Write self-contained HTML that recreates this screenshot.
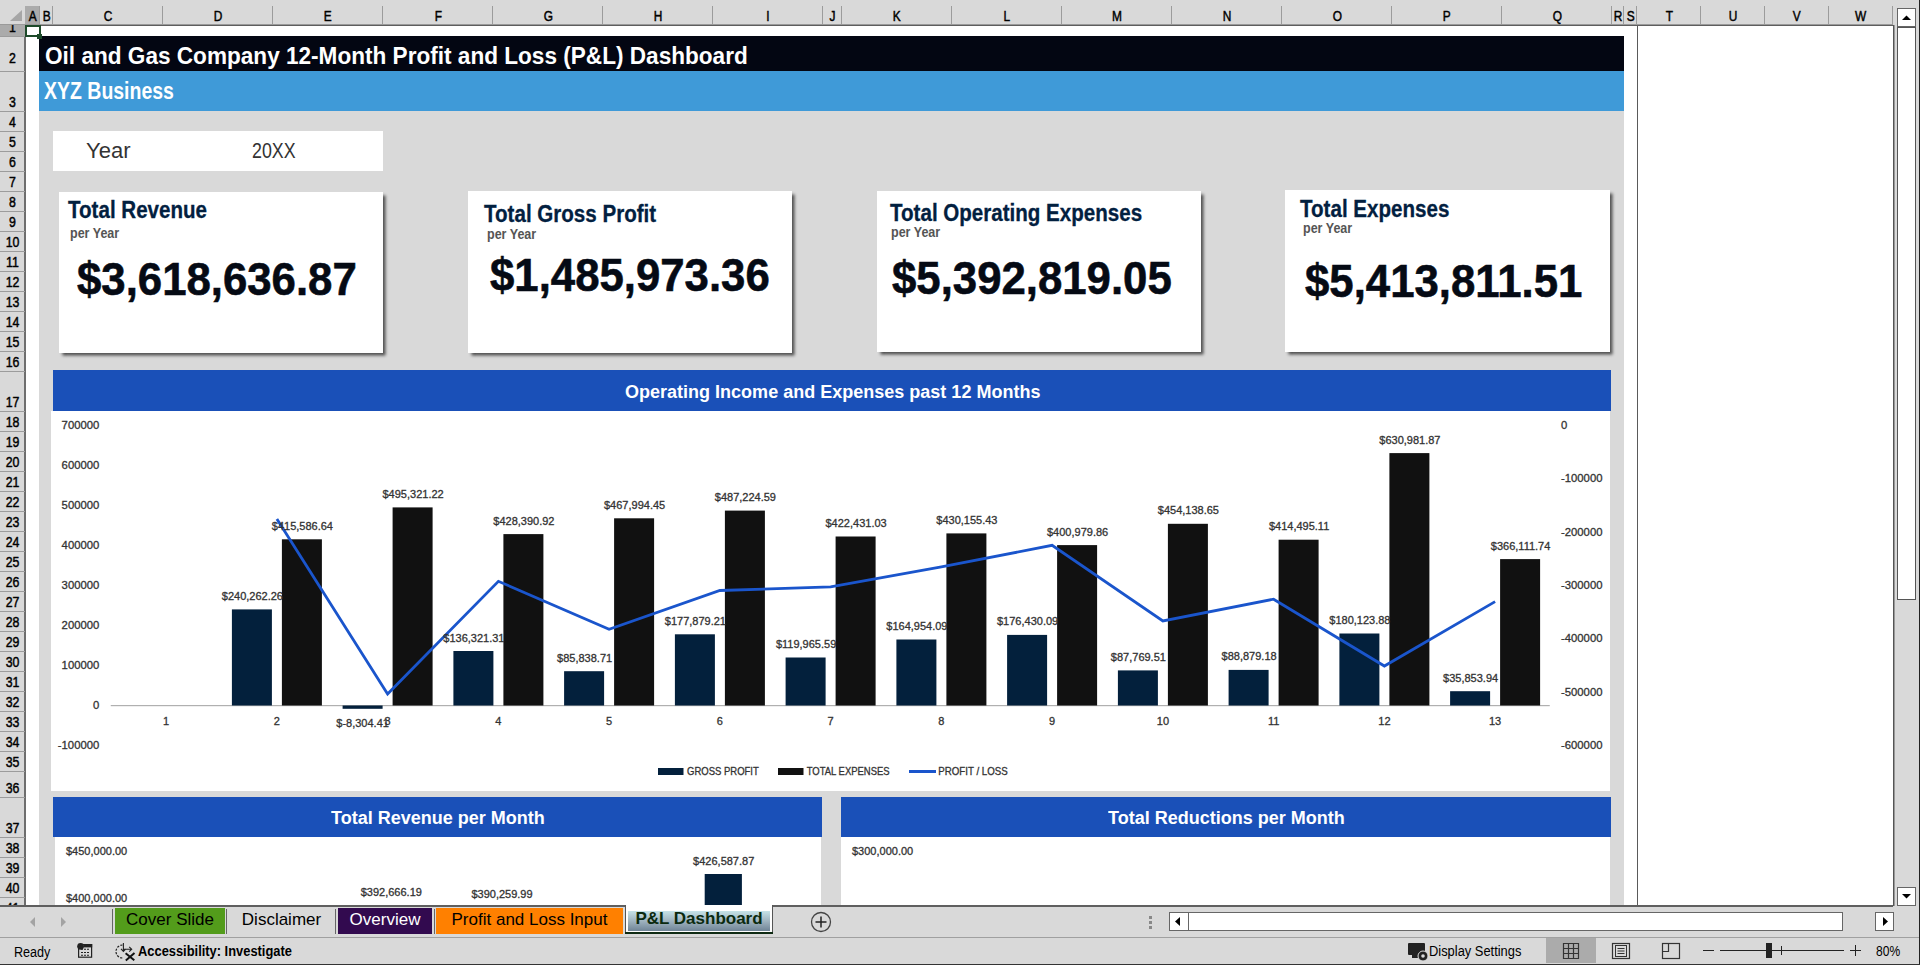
<!DOCTYPE html><html><head><meta charset="utf-8"><style>
html,body{margin:0;padding:0;}
body{width:1920px;height:965px;overflow:hidden;position:relative;background:#d9d9d9;font-family:"Liberation Sans", sans-serif;}
div{box-sizing:border-box;}
.t{position:absolute;white-space:nowrap;line-height:1;}
svg text{stroke:#333;stroke-width:0.3px;}
.ch{position:absolute;top:0;height:25px;text-align:center;font-size:14px;line-height:33px;color:#000;-webkit-text-stroke:0.45px #000;}
.rh{position:absolute;left:0;width:25px;text-align:center;font-size:14px;color:#000;-webkit-text-stroke:0.45px #000;}
</style></head><body>

<div style="position:absolute;left:25px;top:25px;width:1868px;height:880px;background:#fff;"></div>
<div style="position:absolute;left:39px;top:36px;width:1585px;height:869px;background:#d9d9d9;"></div>
<div style="position:absolute;left:1637px;top:25px;width:1px;height:880px;background:#5a5a5a;"></div>
<div style="position:absolute;left:0px;top:0px;width:1893px;height:25px;background:#d9d9d9;"></div>
<div style="position:absolute;left:0px;top:24px;width:1893px;height:1px;background:#9a9a9a;"></div>
<div style="position:absolute;left:0px;top:25px;width:1893px;height:1px;background:#5e5e5e;"></div>
<svg style="position:absolute;left:0;top:0" width="25" height="25"><polygon points="10,21 22,21 22,10" fill="#a6a6a6"/></svg>
<div style="position:absolute;left:25px;top:6px;width:15px;height:18px;background:#ababab;"></div>
<div class="ch" style="left:25px;width:15px;"><span style="display:inline-block;transform:scaleX(0.85);">A</span></div>
<div style="position:absolute;left:39px;top:6px;width:1px;height:18px;background:#9c9c9c;"></div>
<div class="ch" style="left:40px;width:13px;"><span style="display:inline-block;transform:scaleX(0.85);">B</span></div>
<div style="position:absolute;left:52px;top:6px;width:1px;height:18px;background:#9c9c9c;"></div>
<div class="ch" style="left:53px;width:110px;"><span style="display:inline-block;transform:scaleX(0.85);">C</span></div>
<div style="position:absolute;left:162px;top:6px;width:1px;height:18px;background:#9c9c9c;"></div>
<div class="ch" style="left:163px;width:110px;"><span style="display:inline-block;transform:scaleX(0.85);">D</span></div>
<div style="position:absolute;left:272px;top:6px;width:1px;height:18px;background:#9c9c9c;"></div>
<div class="ch" style="left:273px;width:110px;"><span style="display:inline-block;transform:scaleX(0.85);">E</span></div>
<div style="position:absolute;left:382px;top:6px;width:1px;height:18px;background:#9c9c9c;"></div>
<div class="ch" style="left:383px;width:110px;"><span style="display:inline-block;transform:scaleX(0.85);">F</span></div>
<div style="position:absolute;left:492px;top:6px;width:1px;height:18px;background:#9c9c9c;"></div>
<div class="ch" style="left:493px;width:110px;"><span style="display:inline-block;transform:scaleX(0.85);">G</span></div>
<div style="position:absolute;left:602px;top:6px;width:1px;height:18px;background:#9c9c9c;"></div>
<div class="ch" style="left:603px;width:110px;"><span style="display:inline-block;transform:scaleX(0.85);">H</span></div>
<div style="position:absolute;left:712px;top:6px;width:1px;height:18px;background:#9c9c9c;"></div>
<div class="ch" style="left:713px;width:110px;"><span style="display:inline-block;transform:scaleX(0.85);">I</span></div>
<div style="position:absolute;left:822px;top:6px;width:1px;height:18px;background:#9c9c9c;"></div>
<div class="ch" style="left:823px;width:19px;"><span style="display:inline-block;transform:scaleX(0.85);">J</span></div>
<div style="position:absolute;left:841px;top:6px;width:1px;height:18px;background:#9c9c9c;"></div>
<div class="ch" style="left:842px;width:110px;"><span style="display:inline-block;transform:scaleX(0.85);">K</span></div>
<div style="position:absolute;left:951px;top:6px;width:1px;height:18px;background:#9c9c9c;"></div>
<div class="ch" style="left:952px;width:110px;"><span style="display:inline-block;transform:scaleX(0.85);">L</span></div>
<div style="position:absolute;left:1061px;top:6px;width:1px;height:18px;background:#9c9c9c;"></div>
<div class="ch" style="left:1062px;width:110px;"><span style="display:inline-block;transform:scaleX(0.85);">M</span></div>
<div style="position:absolute;left:1171px;top:6px;width:1px;height:18px;background:#9c9c9c;"></div>
<div class="ch" style="left:1172px;width:110px;"><span style="display:inline-block;transform:scaleX(0.85);">N</span></div>
<div style="position:absolute;left:1281px;top:6px;width:1px;height:18px;background:#9c9c9c;"></div>
<div class="ch" style="left:1282px;width:110px;"><span style="display:inline-block;transform:scaleX(0.85);">O</span></div>
<div style="position:absolute;left:1391px;top:6px;width:1px;height:18px;background:#9c9c9c;"></div>
<div class="ch" style="left:1392px;width:110px;"><span style="display:inline-block;transform:scaleX(0.85);">P</span></div>
<div style="position:absolute;left:1501px;top:6px;width:1px;height:18px;background:#9c9c9c;"></div>
<div class="ch" style="left:1502px;width:110px;"><span style="display:inline-block;transform:scaleX(0.85);">Q</span></div>
<div style="position:absolute;left:1611px;top:6px;width:1px;height:18px;background:#9c9c9c;"></div>
<div class="ch" style="left:1612px;width:12px;"><span style="display:inline-block;transform:scaleX(0.85);">R</span></div>
<div style="position:absolute;left:1623px;top:6px;width:1px;height:18px;background:#9c9c9c;"></div>
<div class="ch" style="left:1624px;width:13px;"><span style="display:inline-block;transform:scaleX(0.85);">S</span></div>
<div style="position:absolute;left:1636px;top:6px;width:1px;height:18px;background:#9c9c9c;"></div>
<div class="ch" style="left:1637px;width:64px;"><span style="display:inline-block;transform:scaleX(0.85);">T</span></div>
<div style="position:absolute;left:1700px;top:6px;width:1px;height:18px;background:#9c9c9c;"></div>
<div class="ch" style="left:1701px;width:64px;"><span style="display:inline-block;transform:scaleX(0.85);">U</span></div>
<div style="position:absolute;left:1764px;top:6px;width:1px;height:18px;background:#9c9c9c;"></div>
<div class="ch" style="left:1765px;width:64px;"><span style="display:inline-block;transform:scaleX(0.85);">V</span></div>
<div style="position:absolute;left:1828px;top:6px;width:1px;height:18px;background:#9c9c9c;"></div>
<div class="ch" style="left:1829px;width:64px;"><span style="display:inline-block;transform:scaleX(0.85);">W</span></div>
<div style="position:absolute;left:1892px;top:6px;width:1px;height:18px;background:#9c9c9c;"></div>
<div style="position:absolute;left:0px;top:25px;width:25px;height:880px;background:#d9d9d9;"></div>
<div style="position:absolute;left:24px;top:25px;width:2px;height:880px;background:#6e6e6e;"></div>
<div class="rh" style="top:25px;height:11px;background:#ababab;overflow:hidden;"><div style="position:absolute;left:0;width:25px;top:-6px;line-height:16px;transform:scaleX(0.88);">1</div></div>
<div style="position:absolute;left:0px;top:36px;width:25px;height:1px;background:#9c9c9c;"></div>
<div class="rh" style="top:36px;height:35px;overflow:hidden;"><div style="position:absolute;left:0;width:25px;top:14px;line-height:16px;transform:scaleX(0.88);">2</div></div>
<div style="position:absolute;left:0px;top:71px;width:25px;height:1px;background:#9c9c9c;"></div>
<div class="rh" style="top:71px;height:40px;overflow:hidden;"><div style="position:absolute;left:0;width:25px;top:23px;line-height:16px;transform:scaleX(0.88);">3</div></div>
<div style="position:absolute;left:0px;top:111px;width:25px;height:1px;background:#9c9c9c;"></div>
<div class="rh" style="top:111px;height:20px;overflow:hidden;"><div style="position:absolute;left:0;width:25px;top:3px;line-height:16px;transform:scaleX(0.88);">4</div></div>
<div style="position:absolute;left:0px;top:131px;width:25px;height:1px;background:#9c9c9c;"></div>
<div class="rh" style="top:131px;height:20px;overflow:hidden;"><div style="position:absolute;left:0;width:25px;top:3px;line-height:16px;transform:scaleX(0.88);">5</div></div>
<div style="position:absolute;left:0px;top:151px;width:25px;height:1px;background:#9c9c9c;"></div>
<div class="rh" style="top:151px;height:20px;overflow:hidden;"><div style="position:absolute;left:0;width:25px;top:3px;line-height:16px;transform:scaleX(0.88);">6</div></div>
<div style="position:absolute;left:0px;top:171px;width:25px;height:1px;background:#9c9c9c;"></div>
<div class="rh" style="top:171px;height:20px;overflow:hidden;"><div style="position:absolute;left:0;width:25px;top:3px;line-height:16px;transform:scaleX(0.88);">7</div></div>
<div style="position:absolute;left:0px;top:191px;width:25px;height:1px;background:#9c9c9c;"></div>
<div class="rh" style="top:191px;height:20px;overflow:hidden;"><div style="position:absolute;left:0;width:25px;top:3px;line-height:16px;transform:scaleX(0.88);">8</div></div>
<div style="position:absolute;left:0px;top:211px;width:25px;height:1px;background:#9c9c9c;"></div>
<div class="rh" style="top:211px;height:20px;overflow:hidden;"><div style="position:absolute;left:0;width:25px;top:3px;line-height:16px;transform:scaleX(0.88);">9</div></div>
<div style="position:absolute;left:0px;top:231px;width:25px;height:1px;background:#9c9c9c;"></div>
<div class="rh" style="top:231px;height:20px;overflow:hidden;"><div style="position:absolute;left:0;width:25px;top:3px;line-height:16px;transform:scaleX(0.88);">10</div></div>
<div style="position:absolute;left:0px;top:251px;width:25px;height:1px;background:#9c9c9c;"></div>
<div class="rh" style="top:251px;height:20px;overflow:hidden;"><div style="position:absolute;left:0;width:25px;top:3px;line-height:16px;transform:scaleX(0.88);">11</div></div>
<div style="position:absolute;left:0px;top:271px;width:25px;height:1px;background:#9c9c9c;"></div>
<div class="rh" style="top:271px;height:20px;overflow:hidden;"><div style="position:absolute;left:0;width:25px;top:3px;line-height:16px;transform:scaleX(0.88);">12</div></div>
<div style="position:absolute;left:0px;top:291px;width:25px;height:1px;background:#9c9c9c;"></div>
<div class="rh" style="top:291px;height:20px;overflow:hidden;"><div style="position:absolute;left:0;width:25px;top:3px;line-height:16px;transform:scaleX(0.88);">13</div></div>
<div style="position:absolute;left:0px;top:311px;width:25px;height:1px;background:#9c9c9c;"></div>
<div class="rh" style="top:311px;height:20px;overflow:hidden;"><div style="position:absolute;left:0;width:25px;top:3px;line-height:16px;transform:scaleX(0.88);">14</div></div>
<div style="position:absolute;left:0px;top:331px;width:25px;height:1px;background:#9c9c9c;"></div>
<div class="rh" style="top:331px;height:20px;overflow:hidden;"><div style="position:absolute;left:0;width:25px;top:3px;line-height:16px;transform:scaleX(0.88);">15</div></div>
<div style="position:absolute;left:0px;top:351px;width:25px;height:1px;background:#9c9c9c;"></div>
<div class="rh" style="top:351px;height:20px;overflow:hidden;"><div style="position:absolute;left:0;width:25px;top:3px;line-height:16px;transform:scaleX(0.88);">16</div></div>
<div style="position:absolute;left:0px;top:371px;width:25px;height:1px;background:#9c9c9c;"></div>
<div class="rh" style="top:371px;height:40px;overflow:hidden;"><div style="position:absolute;left:0;width:25px;top:23px;line-height:16px;transform:scaleX(0.88);">17</div></div>
<div style="position:absolute;left:0px;top:411px;width:25px;height:1px;background:#9c9c9c;"></div>
<div class="rh" style="top:411px;height:20px;overflow:hidden;"><div style="position:absolute;left:0;width:25px;top:3px;line-height:16px;transform:scaleX(0.88);">18</div></div>
<div style="position:absolute;left:0px;top:431px;width:25px;height:1px;background:#9c9c9c;"></div>
<div class="rh" style="top:431px;height:20px;overflow:hidden;"><div style="position:absolute;left:0;width:25px;top:3px;line-height:16px;transform:scaleX(0.88);">19</div></div>
<div style="position:absolute;left:0px;top:451px;width:25px;height:1px;background:#9c9c9c;"></div>
<div class="rh" style="top:451px;height:20px;overflow:hidden;"><div style="position:absolute;left:0;width:25px;top:3px;line-height:16px;transform:scaleX(0.88);">20</div></div>
<div style="position:absolute;left:0px;top:471px;width:25px;height:1px;background:#9c9c9c;"></div>
<div class="rh" style="top:471px;height:20px;overflow:hidden;"><div style="position:absolute;left:0;width:25px;top:3px;line-height:16px;transform:scaleX(0.88);">21</div></div>
<div style="position:absolute;left:0px;top:491px;width:25px;height:1px;background:#9c9c9c;"></div>
<div class="rh" style="top:491px;height:20px;overflow:hidden;"><div style="position:absolute;left:0;width:25px;top:3px;line-height:16px;transform:scaleX(0.88);">22</div></div>
<div style="position:absolute;left:0px;top:511px;width:25px;height:1px;background:#9c9c9c;"></div>
<div class="rh" style="top:511px;height:20px;overflow:hidden;"><div style="position:absolute;left:0;width:25px;top:3px;line-height:16px;transform:scaleX(0.88);">23</div></div>
<div style="position:absolute;left:0px;top:531px;width:25px;height:1px;background:#9c9c9c;"></div>
<div class="rh" style="top:531px;height:20px;overflow:hidden;"><div style="position:absolute;left:0;width:25px;top:3px;line-height:16px;transform:scaleX(0.88);">24</div></div>
<div style="position:absolute;left:0px;top:551px;width:25px;height:1px;background:#9c9c9c;"></div>
<div class="rh" style="top:551px;height:20px;overflow:hidden;"><div style="position:absolute;left:0;width:25px;top:3px;line-height:16px;transform:scaleX(0.88);">25</div></div>
<div style="position:absolute;left:0px;top:571px;width:25px;height:1px;background:#9c9c9c;"></div>
<div class="rh" style="top:571px;height:20px;overflow:hidden;"><div style="position:absolute;left:0;width:25px;top:3px;line-height:16px;transform:scaleX(0.88);">26</div></div>
<div style="position:absolute;left:0px;top:591px;width:25px;height:1px;background:#9c9c9c;"></div>
<div class="rh" style="top:591px;height:20px;overflow:hidden;"><div style="position:absolute;left:0;width:25px;top:3px;line-height:16px;transform:scaleX(0.88);">27</div></div>
<div style="position:absolute;left:0px;top:611px;width:25px;height:1px;background:#9c9c9c;"></div>
<div class="rh" style="top:611px;height:20px;overflow:hidden;"><div style="position:absolute;left:0;width:25px;top:3px;line-height:16px;transform:scaleX(0.88);">28</div></div>
<div style="position:absolute;left:0px;top:631px;width:25px;height:1px;background:#9c9c9c;"></div>
<div class="rh" style="top:631px;height:20px;overflow:hidden;"><div style="position:absolute;left:0;width:25px;top:3px;line-height:16px;transform:scaleX(0.88);">29</div></div>
<div style="position:absolute;left:0px;top:651px;width:25px;height:1px;background:#9c9c9c;"></div>
<div class="rh" style="top:651px;height:20px;overflow:hidden;"><div style="position:absolute;left:0;width:25px;top:3px;line-height:16px;transform:scaleX(0.88);">30</div></div>
<div style="position:absolute;left:0px;top:671px;width:25px;height:1px;background:#9c9c9c;"></div>
<div class="rh" style="top:671px;height:20px;overflow:hidden;"><div style="position:absolute;left:0;width:25px;top:3px;line-height:16px;transform:scaleX(0.88);">31</div></div>
<div style="position:absolute;left:0px;top:691px;width:25px;height:1px;background:#9c9c9c;"></div>
<div class="rh" style="top:691px;height:20px;overflow:hidden;"><div style="position:absolute;left:0;width:25px;top:3px;line-height:16px;transform:scaleX(0.88);">32</div></div>
<div style="position:absolute;left:0px;top:711px;width:25px;height:1px;background:#9c9c9c;"></div>
<div class="rh" style="top:711px;height:20px;overflow:hidden;"><div style="position:absolute;left:0;width:25px;top:3px;line-height:16px;transform:scaleX(0.88);">33</div></div>
<div style="position:absolute;left:0px;top:731px;width:25px;height:1px;background:#9c9c9c;"></div>
<div class="rh" style="top:731px;height:20px;overflow:hidden;"><div style="position:absolute;left:0;width:25px;top:3px;line-height:16px;transform:scaleX(0.88);">34</div></div>
<div style="position:absolute;left:0px;top:751px;width:25px;height:1px;background:#9c9c9c;"></div>
<div class="rh" style="top:751px;height:20px;overflow:hidden;"><div style="position:absolute;left:0;width:25px;top:3px;line-height:16px;transform:scaleX(0.88);">35</div></div>
<div style="position:absolute;left:0px;top:771px;width:25px;height:1px;background:#9c9c9c;"></div>
<div class="rh" style="top:771px;height:26px;overflow:hidden;"><div style="position:absolute;left:0;width:25px;top:9px;line-height:16px;transform:scaleX(0.88);">36</div></div>
<div style="position:absolute;left:0px;top:797px;width:25px;height:1px;background:#9c9c9c;"></div>
<div class="rh" style="top:797px;height:40px;overflow:hidden;"><div style="position:absolute;left:0;width:25px;top:23px;line-height:16px;transform:scaleX(0.88);">37</div></div>
<div style="position:absolute;left:0px;top:837px;width:25px;height:1px;background:#9c9c9c;"></div>
<div class="rh" style="top:837px;height:20px;overflow:hidden;"><div style="position:absolute;left:0;width:25px;top:3px;line-height:16px;transform:scaleX(0.88);">38</div></div>
<div style="position:absolute;left:0px;top:857px;width:25px;height:1px;background:#9c9c9c;"></div>
<div class="rh" style="top:857px;height:20px;overflow:hidden;"><div style="position:absolute;left:0;width:25px;top:3px;line-height:16px;transform:scaleX(0.88);">39</div></div>
<div style="position:absolute;left:0px;top:877px;width:25px;height:1px;background:#9c9c9c;"></div>
<div class="rh" style="top:877px;height:20px;overflow:hidden;"><div style="position:absolute;left:0;width:25px;top:3px;line-height:16px;transform:scaleX(0.88);">40</div></div>
<div style="position:absolute;left:0px;top:897px;width:25px;height:1px;background:#9c9c9c;"></div>
<div class="rh" style="top:897px;height:8px;overflow:hidden;"><div style="position:absolute;left:0;width:25px;top:3px;line-height:16px;transform:scaleX(0.88);">41</div></div>
<div style="position:absolute;left:0px;top:917px;width:25px;height:1px;background:#9c9c9c;"></div>
<div style="position:absolute;left:39px;top:36px;width:1585px;height:35px;background:#030612;"></div>
<div class="t " style="left:45px;top:44px;font-size:24.4px;font-weight:bold;color:#fff;transform:scaleX(0.926);transform-origin:0 0;">Oil and Gas Company 12-Month Profit and Loss (P&amp;L) Dashboard</div>
<div style="position:absolute;left:39px;top:71px;width:1585px;height:40px;background:#3f9ad8;"></div>
<div class="t " style="left:44px;top:80px;font-size:23.4px;font-weight:bold;color:#fff;transform:scaleX(0.833);transform-origin:0 0;">XYZ Business</div>
<div style="position:absolute;left:25px;top:25px;width:16px;height:12px;border:2px solid #1d4a2a;"></div>
<div style="position:absolute;left:37px;top:34px;width:5px;height:5px;background:#1d4a2a;"></div>
<div style="position:absolute;left:53px;top:131px;width:330px;height:40px;background:#fff;"></div>
<div class="t " style="left:86px;top:140px;font-size:22px;color:#333;">Year</div>
<div class="t " style="left:252px;top:140px;font-size:22px;color:#333;transform:scaleX(0.81);transform-origin:0 0;">20XX</div>
<div style="position:absolute;left:59px;top:192px;width:324px;height:161px;background:#fff;box-shadow:2.5px 2.5px 3px rgba(0,0,0,0.65);"></div>
<div class="t " style="left:68px;top:199.053px;font-size:23px;font-weight:bold;color:#02203f;transform:scaleX(0.894);transform-origin:0 0;-webkit-text-stroke:0.3px #02203f;">Total Revenue</div>
<div class="t " style="left:70px;top:226.3784px;font-size:14.4px;font-weight:bold;color:#555;transform:scaleX(0.87);transform-origin:0 0;">per Year</div>
<div class="t " style="left:77px;top:255.99399999999997px;font-size:46px;font-weight:bold;color:#050a14;transform:scaleX(0.951);transform-origin:0 0;-webkit-text-stroke:0.6px #050a14;">$3,618,636.87</div>
<div style="position:absolute;left:468px;top:191px;width:324px;height:162px;background:#fff;box-shadow:2.5px 2.5px 3px rgba(0,0,0,0.65);"></div>
<div class="t " style="left:484px;top:202.85299999999998px;font-size:23px;font-weight:bold;color:#02203f;transform:scaleX(0.894);transform-origin:0 0;-webkit-text-stroke:0.3px #02203f;">Total Gross Profit</div>
<div class="t " style="left:487px;top:227.2784px;font-size:14.4px;font-weight:bold;color:#555;transform:scaleX(0.87);transform-origin:0 0;">per Year</div>
<div class="t " style="left:490px;top:251.894px;font-size:46px;font-weight:bold;color:#050a14;transform:scaleX(0.951);transform-origin:0 0;-webkit-text-stroke:0.6px #050a14;">$1,485,973.36</div>
<div style="position:absolute;left:877px;top:191px;width:324px;height:161px;background:#fff;box-shadow:2.5px 2.5px 3px rgba(0,0,0,0.65);"></div>
<div class="t " style="left:889.5px;top:201.953px;font-size:23px;font-weight:bold;color:#02203f;transform:scaleX(0.894);transform-origin:0 0;-webkit-text-stroke:0.3px #02203f;">Total Operating Expenses</div>
<div class="t " style="left:891px;top:224.7784px;font-size:14.4px;font-weight:bold;color:#555;transform:scaleX(0.87);transform-origin:0 0;">per Year</div>
<div class="t " style="left:892px;top:255.29399999999998px;font-size:46px;font-weight:bold;color:#050a14;transform:scaleX(0.951);transform-origin:0 0;-webkit-text-stroke:0.6px #050a14;">$5,392,819.05</div>
<div style="position:absolute;left:1285px;top:190px;width:325px;height:162px;background:#fff;box-shadow:2.5px 2.5px 3px rgba(0,0,0,0.65);"></div>
<div class="t " style="left:1300px;top:197.653px;font-size:23px;font-weight:bold;color:#02203f;transform:scaleX(0.894);transform-origin:0 0;-webkit-text-stroke:0.3px #02203f;">Total Expenses</div>
<div class="t " style="left:1303px;top:221.4784px;font-size:14.4px;font-weight:bold;color:#555;transform:scaleX(0.87);transform-origin:0 0;">per Year</div>
<div class="t " style="left:1305px;top:257.594px;font-size:46px;font-weight:bold;color:#050a14;transform:scaleX(0.951);transform-origin:0 0;-webkit-text-stroke:0.6px #050a14;">$5,413,811.51</div>
<div style="position:absolute;left:53px;top:370px;width:1558px;height:41px;background:#1a50b8;"></div>
<div class="t " style="left:625px;top:383px;font-size:18.7px;font-weight:bold;color:#fff;transform:scaleX(0.964);transform-origin:0 0;">Operating Income and Expenses past 12 Months</div>
<div style="position:absolute;left:51px;top:411px;width:1559px;height:380px;background:#fff;"></div>
<div style="position:absolute;left:53px;top:797px;width:769px;height:40px;background:#1a50b8;"></div>
<div style="position:absolute;left:841px;top:797px;width:770px;height:40px;background:#1a50b8;"></div>
<div style="position:absolute;left:55px;top:837px;width:766px;height:68px;background:#fff;"></div>
<div style="position:absolute;left:841px;top:837px;width:769px;height:68px;background:#fff;"></div>
<div style="position:absolute;left:0;top:0;width:1893px;height:905px;overflow:hidden;"><svg style="position:absolute;left:0;top:0" width="1920" height="965" viewBox="0 0 1920 965">
<g font-family="Liberation Sans, sans-serif" fill="#333">
<text x="99.3" y="429.0" font-size="11.3" text-anchor="end">700000</text>
<text x="99.3" y="469.0" font-size="11.3" text-anchor="end">600000</text>
<text x="99.3" y="509.0" font-size="11.3" text-anchor="end">500000</text>
<text x="99.3" y="549.0" font-size="11.3" text-anchor="end">400000</text>
<text x="99.3" y="589.0" font-size="11.3" text-anchor="end">300000</text>
<text x="99.3" y="629.0" font-size="11.3" text-anchor="end">200000</text>
<text x="99.3" y="669.0" font-size="11.3" text-anchor="end">100000</text>
<text x="99.3" y="709.0" font-size="11.3" text-anchor="end">0</text>
<text x="99.3" y="749.0" font-size="11.3" text-anchor="end">-100000</text>
<text x="1561" y="428.8" font-size="11.3">0</text>
<text x="1561" y="482.1" font-size="11.3">-100000</text>
<text x="1561" y="535.5" font-size="11.3">-200000</text>
<text x="1561" y="588.8" font-size="11.3">-300000</text>
<text x="1561" y="642.1" font-size="11.3">-400000</text>
<text x="1561" y="695.5" font-size="11.3">-500000</text>
<text x="1561" y="748.8" font-size="11.3">-600000</text>
<rect x="110.75" y="705" width="1439" height="1.2" fill="#b0b0b0" stroke="none"/>
<text x="166.1" y="724.5" font-size="11" text-anchor="middle">1</text>
<text x="276.9" y="724.5" font-size="11" text-anchor="middle">2</text>
<rect x="231.9" y="609.4" width="40" height="96.1" fill="#03203c"/>
<rect x="281.9" y="539.3" width="40" height="166.2" fill="#111"/>
<text x="387.6" y="724.5" font-size="11" text-anchor="middle">3</text>
<rect x="342.6" y="705.5" width="40" height="3.3" fill="#03203c"/>
<rect x="392.6" y="507.4" width="40" height="198.1" fill="#111"/>
<text x="498.4" y="724.5" font-size="11" text-anchor="middle">4</text>
<rect x="453.4" y="651.0" width="40" height="54.5" fill="#03203c"/>
<rect x="503.4" y="534.1" width="40" height="171.4" fill="#111"/>
<text x="609.1" y="724.5" font-size="11" text-anchor="middle">5</text>
<rect x="564.1" y="671.2" width="40" height="34.3" fill="#03203c"/>
<rect x="614.1" y="518.3" width="40" height="187.2" fill="#111"/>
<text x="719.9" y="724.5" font-size="11" text-anchor="middle">6</text>
<rect x="674.9" y="634.3" width="40" height="71.2" fill="#03203c"/>
<rect x="724.9" y="510.6" width="40" height="194.9" fill="#111"/>
<text x="830.6" y="724.5" font-size="11" text-anchor="middle">7</text>
<rect x="785.6" y="657.5" width="40" height="48.0" fill="#03203c"/>
<rect x="835.6" y="536.5" width="40" height="169.0" fill="#111"/>
<text x="941.4" y="724.5" font-size="11" text-anchor="middle">8</text>
<rect x="896.4" y="639.5" width="40" height="66.0" fill="#03203c"/>
<rect x="946.4" y="533.4" width="40" height="172.1" fill="#111"/>
<text x="1052.1" y="724.5" font-size="11" text-anchor="middle">9</text>
<rect x="1007.1" y="634.9" width="40" height="70.6" fill="#03203c"/>
<rect x="1057.1" y="545.1" width="40" height="160.4" fill="#111"/>
<text x="1162.9" y="724.5" font-size="11" text-anchor="middle">10</text>
<rect x="1117.9" y="670.4" width="40" height="35.1" fill="#03203c"/>
<rect x="1167.9" y="523.8" width="40" height="181.7" fill="#111"/>
<text x="1273.6" y="724.5" font-size="11" text-anchor="middle">11</text>
<rect x="1228.6" y="669.9" width="40" height="35.6" fill="#03203c"/>
<rect x="1278.6" y="539.7" width="40" height="165.8" fill="#111"/>
<text x="1384.4" y="724.5" font-size="11" text-anchor="middle">12</text>
<rect x="1339.4" y="633.5" width="40" height="72.0" fill="#03203c"/>
<rect x="1389.4" y="453.1" width="40" height="252.4" fill="#111"/>
<text x="1495.1" y="724.5" font-size="11" text-anchor="middle">13</text>
<rect x="1450.1" y="691.2" width="40" height="14.3" fill="#03203c"/>
<rect x="1500.1" y="559.1" width="40" height="146.4" fill="#111"/>
<polyline points="276.9,519.0 387.6,694.1 498.4,581.3 609.1,629.3 719.9,590.5 830.6,586.8 941.4,566.9 1052.1,545.3 1162.9,620.9 1273.6,599.2 1384.4,666.0 1495.1,601.6" fill="none" stroke="#1a55cc" stroke-width="2.8" stroke-linejoin="miter"/>
<text x="252.4" y="599.9" font-size="11" text-anchor="middle">$240,262.26</text>
<text x="302.4" y="529.8" font-size="11" text-anchor="middle">$415,586.64</text>
<text x="362.6" y="726.5" font-size="11" text-anchor="middle">$-8,304.41</text>
<text x="413.1" y="497.9" font-size="11" text-anchor="middle">$495,321.22</text>
<text x="473.9" y="641.5" font-size="11" text-anchor="middle">$136,321.31</text>
<text x="523.9" y="524.6" font-size="11" text-anchor="middle">$428,390.92</text>
<text x="584.6" y="661.7" font-size="11" text-anchor="middle">$85,838.71</text>
<text x="634.6" y="508.8" font-size="11" text-anchor="middle">$467,994.45</text>
<text x="695.4" y="624.8" font-size="11" text-anchor="middle">$177,879.21</text>
<text x="745.4" y="501.1" font-size="11" text-anchor="middle">$487,224.59</text>
<text x="806.1" y="648.0" font-size="11" text-anchor="middle">$119,965.59</text>
<text x="856.1" y="527.0" font-size="11" text-anchor="middle">$422,431.03</text>
<text x="916.9" y="630.0" font-size="11" text-anchor="middle">$164,954.09</text>
<text x="966.9" y="523.9" font-size="11" text-anchor="middle">$430,155.43</text>
<text x="1027.6" y="625.4" font-size="11" text-anchor="middle">$176,430.09</text>
<text x="1077.6" y="535.6" font-size="11" text-anchor="middle">$400,979.86</text>
<text x="1138.4" y="660.9" font-size="11" text-anchor="middle">$87,769.51</text>
<text x="1188.4" y="514.3" font-size="11" text-anchor="middle">$454,138.65</text>
<text x="1249.1" y="660.4" font-size="11" text-anchor="middle">$88,879.18</text>
<text x="1299.1" y="530.2" font-size="11" text-anchor="middle">$414,495.11</text>
<text x="1359.9" y="624.0" font-size="11" text-anchor="middle">$180,123.88</text>
<text x="1409.9" y="443.6" font-size="11" text-anchor="middle">$630,981.87</text>
<text x="1470.6" y="681.7" font-size="11" text-anchor="middle">$35,853.94</text>
<text x="1520.6" y="549.6" font-size="11" text-anchor="middle">$366,111.74</text>
<rect x="658" y="768" width="25.5" height="7" fill="#03203c"/>
<text x="687" y="775.2" font-size="10.3" textLength="71.8" lengthAdjust="spacingAndGlyphs">GROSS PROFIT</text>
<rect x="778" y="768" width="25.5" height="7" fill="#111"/>
<text x="806.7" y="775.2" font-size="10.3" textLength="82.9" lengthAdjust="spacingAndGlyphs">TOTAL EXPENSES</text>
<rect x="909" y="770" width="27" height="3" fill="#1a55cc"/>
<text x="938.3" y="775.2" font-size="10.3" textLength="69.4" lengthAdjust="spacingAndGlyphs">PROFIT / LOSS</text>
<text x="66" y="855.2" font-size="11">$450,000.00</text>
<text x="66" y="901.7" font-size="11">$400,000.00</text>
<text x="391.3" y="895.8" font-size="11" text-anchor="middle">$392,666.19</text>
<text x="502" y="898.4" font-size="11" text-anchor="middle">$390,259.99</text>
<text x="723.7" y="864.8" font-size="11" text-anchor="middle">$426,587.87</text>
<rect x="704.7" y="874" width="37.2" height="40" fill="#03203c"/>
<text x="852" y="854.9" font-size="11">$300,000.00</text>
</g></svg></div><div class="t " style="left:331px;top:808.5px;font-size:18.7px;font-weight:bold;color:#fff;transform:scaleX(0.964);transform-origin:0 0;">Total Revenue per Month</div><div class="t " style="left:1108px;top:808.5px;font-size:18.7px;font-weight:bold;color:#fff;transform:scaleX(0.964);transform-origin:0 0;">Total Reductions per Month</div>
<div style="position:absolute;left:1893px;top:25px;width:1px;height:881px;background:#555;"></div>
<div style="position:absolute;left:1894px;top:25px;width:1px;height:881px;background:#999;"></div>
<div style="position:absolute;left:1895px;top:0px;width:25px;height:905px;background:#d9d9d9;"></div>
<div style="position:absolute;left:1897px;top:8px;width:19px;height:19px;background:#fff;border:1px solid #666;"></div>
<svg style="position:absolute;left:1897px;top:8px" width="19" height="19"><polygon points="5,12 14,12 9.5,7.5" fill="#000"/></svg>
<div style="position:absolute;left:1897px;top:27px;width:19px;height:573px;background:#fff;border:1px solid #555;"></div>
<div style="position:absolute;left:1897px;top:887px;width:19px;height:19px;background:#fff;border:1px solid #666;"></div>
<svg style="position:absolute;left:1897px;top:887px" width="19" height="19"><polygon points="5,7 14,7 9.5,11.5" fill="#000"/></svg>
<div style="position:absolute;left:1919px;top:0px;width:1px;height:965px;background:#222;"></div>
<div style="position:absolute;left:0px;top:905px;width:1893px;height:2px;background:#5f5f5f;"></div>
<div style="position:absolute;left:0px;top:907px;width:1919px;height:30px;background:#d9d9d9;"></div>
<div style="position:absolute;left:0px;top:937px;width:1919px;height:1px;background:#a0a0a0;"></div>
<svg style="position:absolute;left:26px;top:914px" width="50" height="16"><polygon points="4,8 9,3 9,13" fill="#a3a3a3"/><polygon points="35,3 40,8 35,13" fill="#a3a3a3"/></svg>
<div style="position:absolute;left:115px;top:908px;width:110px;height:26px;background:#539c1b;"></div>
<div class="t" style="left:115px;width:110px;top:911px;text-align:center;font-size:17px;color:#000;">Cover Slide</div>
<div class="t" style="left:227px;width:109px;top:911px;text-align:center;font-size:17px;color:#000;">Disclaimer</div>
<div style="position:absolute;left:338px;top:908px;width:94px;height:26px;background:#320a4f;"></div>
<div class="t" style="left:338px;width:94px;top:911px;text-align:center;font-size:17px;color:#fff;">Overview</div>
<div style="position:absolute;left:436px;top:908px;width:187px;height:26px;background:#ff8000;"></div>
<div class="t" style="left:436px;width:187px;top:911px;text-align:center;font-size:17px;color:#000;">Profit and Loss Input</div>
<div style="position:absolute;left:112px;top:909px;width:1px;height:25px;background:#666;"></div>
<div style="position:absolute;left:226px;top:909px;width:1px;height:25px;background:#666;"></div>
<div style="position:absolute;left:335px;top:909px;width:1px;height:25px;background:#666;"></div>
<div style="position:absolute;left:434px;top:909px;width:1px;height:25px;background:#666;"></div>
<div style="position:absolute;left:625px;top:905px;width:148px;height:29px;background:#fff;border:1px solid #555;border-top:none;"></div>
<div style="position:absolute;left:628px;top:911px;width:142px;height:20px;background:linear-gradient(#c6e3e8,#9fb3bf 50%,#6f8496);"></div>
<div style="position:absolute;left:625px;top:932px;width:148px;height:2px;background:#0e2a12;"></div>
<div class="t" style="left:625px;width:148px;top:910px;text-align:center;font-size:17px;font-weight:bold;color:#0b2a0f;">P&amp;L Dashboard</div>
<svg style="position:absolute;left:810px;top:911px" width="22" height="22"><circle cx="11" cy="11" r="9.5" fill="none" stroke="#444" stroke-width="1.3"/><path d="M11 5.5V16.5M5.5 11H16.5" stroke="#222" stroke-width="1.5"/></svg>
<svg style="position:absolute;left:1148px;top:914px" width="6" height="16"><rect x="1" y="2" width="3" height="3" fill="#888"/><rect x="1" y="7" width="3" height="3" fill="#888"/><rect x="1" y="12" width="3" height="3" fill="#888"/></svg>
<div style="position:absolute;left:1169px;top:912px;width:674px;height:19px;background:#fff;border:1px solid #666;"></div>
<div style="position:absolute;left:1188px;top:912px;width:1px;height:19px;background:#666;"></div>
<svg style="position:absolute;left:1169px;top:912px" width="19" height="19"><polygon points="6,9.5 11,5 11,14" fill="#000"/></svg>
<div style="position:absolute;left:1875px;top:912px;width:19px;height:19px;background:#fff;border:1px solid #666;"></div>
<svg style="position:absolute;left:1875px;top:912px" width="19" height="19"><polygon points="8,5 13,9.5 8,14" fill="#000"/></svg>
<div style="position:absolute;left:0px;top:938px;width:1919px;height:25.5px;background:#d9d9d9;"></div>
<div style="position:absolute;left:0px;top:963.5px;width:1920px;height:1.5px;background:#333;"></div>
<div class="t " style="left:14px;top:945px;font-size:14px;color:#000;transform:scaleX(0.9);transform-origin:0 0;">Ready</div>
<svg style="position:absolute;left:60px;top:938px" width="100" height="26" viewBox="60 938 100 26"><rect x="78.6" y="944.6" width="13" height="12.6" fill="none" stroke="#222" stroke-width="1.2"/><rect x="84" y="944" width="8.2" height="3.4" fill="#222"/><circle cx="80.6" cy="946.3" r="3.4" fill="#222"/><path d="M81 949.3h2M84 949.3h2M87 949.3h2M81 952.5h2M84 952.5h2M87 952.5h2M81 955.3h2M84 955.3h2M87 955.3h2" stroke="#222" stroke-width="1.1"/><path d="M122.5 945 A6.5 6.5 0 0 0 122.5 958" fill="none" stroke="#222" stroke-width="1.2" stroke-dasharray="2.2 1.3"/><path d="M123.4 943V951.3M121 948.8l2.4 2.6 2.4-2.6M123.4 949.2H131.6M129.2 946.8l2.5 2.4-2.5 2.4" fill="none" stroke="#222" stroke-width="1.1"/><path d="M125.6 953.2L134.3 960.2M134.5 953L125.8 960.4" stroke="#111" stroke-width="2"/></svg>
<div class="t " style="left:138px;top:944px;font-size:14px;font-weight:bold;color:#000;transform:scaleX(0.92);transform-origin:0 0;">Accessibility: Investigate</div>
<svg style="position:absolute;left:1407px;top:941px" width="22" height="22"><rect x="1" y="2" width="17" height="12" rx="1" fill="#222"/><rect x="5" y="14" width="6" height="3" fill="#222"/><circle cx="16" cy="15" r="5" fill="#222" stroke="#d9d9d9" stroke-width="1"/><circle cx="16" cy="15" r="1.8" fill="#d9d9d9"/></svg>
<div class="t " style="left:1429px;top:944px;font-size:14px;color:#000;transform:scaleX(0.92);transform-origin:0 0;">Display Settings</div>
<div style="position:absolute;left:1546px;top:938px;width:50px;height:25px;background:#ababab;"></div>
<svg style="position:absolute;left:1562px;top:942px" width="18" height="18"><path d="M1.5 1.5h15v15h-15zM6.5 1.5v15M11.5 1.5v15M1.5 6.5h15M1.5 11.5h15" fill="none" stroke="#333" stroke-width="1.2"/></svg>
<svg style="position:absolute;left:1611px;top:942px" width="20" height="18"><rect x="1.5" y="1.5" width="17" height="15" fill="none" stroke="#333" stroke-width="1.2"/><rect x="4.5" y="3.5" width="11" height="11" fill="none" stroke="#333" stroke-width="1"/><path d="M6.5 6.5h7M6.5 9h7M6.5 11.5h7" stroke="#333" stroke-width="1"/></svg>
<svg style="position:absolute;left:1661px;top:942px" width="20" height="18"><rect x="1.5" y="1.5" width="17" height="15" fill="none" stroke="#333" stroke-width="1.2"/><path d="M7.5 1.5v8h-6M1.5 9.5h6" fill="none" stroke="#333" stroke-width="1.2"/></svg>
<div style="position:absolute;left:1703px;top:950px;width:11px;height:1px;background:#222;"></div>
<div style="position:absolute;left:1720px;top:950px;width:124px;height:1px;background:#222;"></div>
<div style="position:absolute;left:1766px;top:943px;width:6px;height:15px;background:#222;"></div>
<div style="position:absolute;left:1781px;top:946px;width:1px;height:9px;background:#222;"></div>
<div style="position:absolute;left:1850px;top:950px;width:11px;height:1px;background:#222;"></div>
<div style="position:absolute;left:1855px;top:945px;width:1px;height:11px;background:#222;"></div>
<div class="t " style="left:1876px;top:944px;font-size:14px;color:#000;transform:scaleX(0.86);transform-origin:0 0;">80%</div>
</body></html>
